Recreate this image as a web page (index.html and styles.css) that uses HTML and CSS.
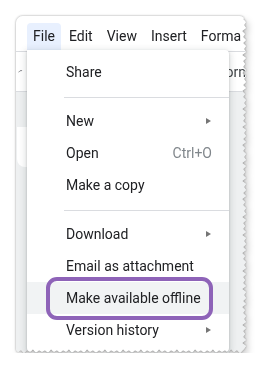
FILE: index.html
```html
<!doctype html>
<html>
<head>
    <title>File menu</title>
    <link rel="stylesheet" href="styles.css">
</head>
<body>
    <div class="frame">
        <div class="shot">
            <div class="menubar">
                <span class="menubar-item active">File</span>
                <span class="menubar-item">Edit</span>
                <span class="menubar-item">View</span>
                <span class="menubar-item">Insert</span>
                <span class="menubar-item">Forma</span>
            </div>
            <div class="toolbar">
                <svg class="undo" width="10" height="10" viewBox="0 0 10 10">
                    <path d="M1 8 Q4 3 9 4" fill="none" stroke="#5f6368" stroke-width="1.6"/>
                </svg>
                <span class="style-select">orn</span>
            </div>
            <div class="doc">
                <div class="page-edge"></div>
            </div>

            <div class="menu">
                <div class="menu-item">Share</div>
                <div class="menu-sep"></div>
                <div class="menu-item">New <span class="arrow"></span></div>
                <div class="menu-item">Open <span class="shortcut">Ctrl+O</span></div>
                <div class="menu-item">Make a copy</div>
                <div class="menu-sep"></div>
                <div class="menu-item">Download <span class="arrow"></span></div>
                <div class="menu-item">Email as attachment</div>
                <div class="menu-item hover">
                    Make available offline
                    <span class="ring"></span>
                </div>
                <div class="menu-item">Version history <span class="arrow"></span></div>
            </div>
        </div>
    </div>
</body>
</html>
```

FILE: styles.css
```css
body {
    margin: 0;
    background-color: white;
    font-family: Roboto, Arial, sans-serif;
    font-size: 14px;
    color: #202124;
}
.frame {
    margin: 16px 0 0 16px;
    width: 230px;
    height: 337px;
    filter: drop-shadow(0 0 1px rgba(0,0,0,0.35)) drop-shadow(3px 4px 3px rgba(0,0,0,0.18));
}
.shot {
    position: relative;
    width: 230px;
    height: 337px;
    display: flex;
    flex-direction: column;
    overflow: hidden;
    background-color: #eef0f1;
    border-radius: 7px 7px 0 0;
    clip-path: polygon(0 0, 230px 0, 227px 3px, 230px 6px, 228px 9px, 230px 12px, 226px 15px, 229px 18px, 227px 21px, 230px 24px, 227px 27px, 230px 30px, 228px 33px, 230px 36px, 226px 39px, 230px 42px, 227px 45px, 229px 48px, 227px 51px, 230px 54px, 226px 57px, 230px 60px, 228px 63px, 230px 66px, 227px 69px, 230px 72px, 226px 75px, 229px 78px, 227px 81px, 230px 84px, 228px 87px, 230px 90px, 226px 93px, 230px 96px, 227px 99px, 229px 102px, 227px 105px, 230px 108px, 226px 111px, 230px 114px, 228px 117px, 230px 120px, 227px 123px, 230px 126px, 226px 129px, 229px 132px, 227px 135px, 230px 138px, 228px 141px, 230px 144px, 226px 147px, 230px 150px, 227px 153px, 229px 156px, 227px 159px, 230px 162px, 226px 165px, 230px 168px, 228px 171px, 230px 174px, 227px 177px, 230px 180px, 226px 183px, 229px 186px, 227px 189px, 230px 192px, 228px 195px, 230px 198px, 226px 201px, 230px 204px, 227px 207px, 229px 210px, 227px 213px, 230px 216px, 226px 219px, 230px 222px, 228px 225px, 230px 228px, 227px 231px, 230px 234px, 226px 237px, 229px 240px, 227px 243px, 230px 246px, 228px 249px, 230px 252px, 226px 255px, 230px 258px, 227px 261px, 229px 264px, 227px 267px, 230px 270px, 226px 273px, 230px 276px, 228px 279px, 230px 282px, 227px 285px, 230px 288px, 226px 291px, 229px 294px, 227px 297px, 230px 300px, 228px 303px, 230px 306px, 226px 309px, 230px 312px, 227px 315px, 229px 318px, 227px 321px, 230px 324px, 226px 327px, 230px 330px, 228px 333px, 227px 334px, 224px 337px, 221px 334px, 218px 336px, 215px 333px, 212px 337px, 209px 334px, 206px 336px, 203px 334px, 200px 337px, 197px 333px, 194px 336px, 191px 334px, 188px 337px, 185px 334px, 182px 336px, 179px 333px, 176px 337px, 173px 334px, 170px 336px, 167px 334px, 164px 337px, 161px 333px, 158px 336px, 155px 334px, 152px 337px, 149px 334px, 146px 336px, 143px 333px, 140px 337px, 137px 334px, 134px 336px, 131px 334px, 128px 337px, 125px 333px, 122px 336px, 119px 334px, 116px 337px, 113px 334px, 110px 336px, 107px 333px, 104px 337px, 101px 334px, 98px 336px, 95px 334px, 92px 337px, 89px 333px, 86px 336px, 83px 334px, 80px 337px, 77px 334px, 74px 336px, 71px 333px, 68px 337px, 65px 334px, 62px 336px, 59px 334px, 56px 337px, 53px 333px, 50px 336px, 47px 334px, 44px 337px, 41px 334px, 38px 336px, 35px 333px, 32px 337px, 29px 334px, 26px 336px, 23px 334px, 20px 337px, 17px 333px, 14px 336px, 11px 334px, 8px 337px, 5px 334px, 2px 336px, 0 334px);
}
.menubar {
    display: flex;
    height: 35px;
    padding: 7px 0 0 11px;
    box-sizing: border-box;
    background-color: white;
    white-space: nowrap;
    overflow: hidden;
}
.menubar-item {
    height: 28px;
    line-height: 27px;
    padding: 0 6px;
    margin-right: 2px;
    border-radius: 4px 4px 0 0;
}
.menubar-item.active {
    background-color: #e8f0fe;
}
.toolbar {
    display: flex;
    align-items: center;
    height: 39px;
    border-top: 1px solid #dadce0;
    border-bottom: 1px solid #dadce0;
    background-color: white;
    white-space: nowrap;
    overflow: hidden;
}
.undo {
    margin: 0 0 2px 2px;
}
.style-select {
    margin-left: 203px;
    color: #3c4043;
}
.doc {
    flex: 1;
    background-color: #eef0f1;
}
.page-edge {
    width: 10px;
    height: 40px;
    margin-top: 35px;
    margin-left: 1px;
    background-color: white;
    border-radius: 0 0 0 8px;
}
.menu {
    position: absolute;
    left: 11px;
    top: 34px;
    width: 202px;
    padding: 6px 0;
    background-color: white;
    border-radius: 0 4px 4px 4px;
    box-shadow: 0 1px 2px rgba(60,64,67,0.3), 0 2px 6px 2px rgba(60,64,67,0.15);
}
.menu-item {
    position: relative;
    display: flex;
    align-items: center;
    justify-content: space-between;
    height: 32px;
    padding: 0 17px 0 39px;
    white-space: nowrap;
}
.menu-item.hover {
    background-color: #f1f3f4;
}
.menu-sep {
    height: 1px;
    margin: 9px 0 7px 37px;
    background-color: #dadce0;
}
.shortcut {
    color: #80868b;
}
.arrow {
    width: 0;
    height: 0;
    margin-right: 1px;
    border-left: 5px solid #757575;
    border-top: 3.5px solid transparent;
    border-bottom: 3.5px solid transparent;
}
.ring {
    position: absolute;
    left: 19px;
    top: -5px;
    width: 167px;
    height: 43px;
    box-sizing: border-box;
    border: 4px solid #8e63b8;
    border-radius: 11px;
}
```
